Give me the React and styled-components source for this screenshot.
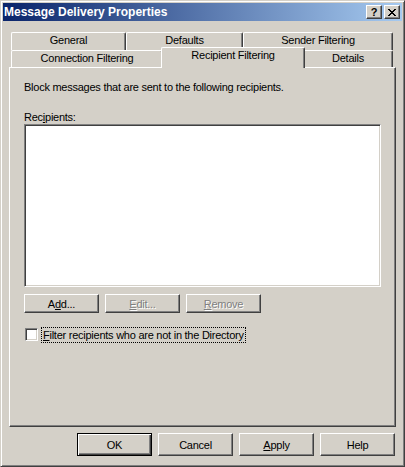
import React from 'react';
import styled, { createGlobalStyle, css } from 'styled-components';

const GlobalStyle = createGlobalStyle`
  html, body {
    margin: 0;
    padding: 0;
    background: #d4d0c8;
  }
`;

const raised = css`
  border: 1px solid;
  border-color: #ffffff #404040 #404040 #ffffff;
  box-shadow: inset -1px -1px #808080;
`;

const Window = styled.div`
  width: 405px;
  height: 467px;
  box-sizing: border-box;
  padding: 2px;
  background: #d4d0c8;
  border: 1px solid;
  border-color: #d4d0c8 #404040 #404040 #d4d0c8;
  box-shadow: inset 1px 1px #ffffff, inset -1px -1px #808080;
  display: flex;
  flex-direction: column;
  font-family: "Liberation Sans", Arial, sans-serif;
  font-size: 11px;
  letter-spacing: -0.25px;
  color: #000;
`;

const TitleBar = styled.div`
  height: 18px;
  display: flex;
  align-items: center;
  padding: 0 2px 0 1px;
  background: linear-gradient(to right, #0a246a, #a6caf0);
`;

const TitleText = styled.div`
  flex: 1;
  color: #fff;
  font-weight: bold;
  font-size: 12px;
  letter-spacing: 0;
  line-height: 18px;
  white-space: nowrap;
`;

const TitleButtons = styled.div`
  display: flex;
  gap: 2px;
`;

const TitleButton = styled.div`
  ${raised};
  width: 16px;
  height: 14px;
  box-sizing: border-box;
  background: #d4d0c8;
  display: flex;
  align-items: center;
  justify-content: center;
  font-weight: bold;
  font-size: 11px;
  letter-spacing: 0;
  line-height: 12px;
`;

const Body = styled.div`
  padding: 11px 6px 0;
`;

const TabStrip = styled.div`
  display: flex;
  flex-direction: column;
  padding-left: 2px;
`;

const TabRow = styled.div`
  display: flex;
  position: relative;
`;

const Tab = styled.div`
  box-sizing: border-box;
  width: ${(p) => p.$w}px;
  height: ${(p) => p.$h}px;
  border-top: 1px solid #fff;
  border-left: 1px solid #fff;
  border-right: 1px solid #404040;
  border-top-left-radius: 2px;
  border-top-right-radius: 2px;
  box-shadow: inset -1px 0 #808080;
  background: #d4d0c8;
  text-align: center;
  line-height: 13px;
  padding-top: 1px;
  white-space: nowrap;
`;

const ActiveTab = styled(Tab)`
  position: relative;
  z-index: 2;
  margin: -3px -2px -1px;
  padding-top: 1px;
`;

const Panel = styled.div`
  ${raised};
  height: 360px;
  box-sizing: border-box;
  padding: 13px 14px 0;
  display: flex;
  flex-direction: column;
`;

const Line = styled.div`
  line-height: 13px;
  margin-bottom: ${(p) => p.$mb || 0}px;
`;

const ListBox = styled.div`
  width: 357px;
  height: 163px;
  box-sizing: border-box;
  background: #fff;
  border: 1px solid;
  border-color: #808080 #ffffff #ffffff #808080;
  box-shadow: inset 1px 1px #404040, inset -1px -1px #d4d0c8;
`;

const ButtonRow = styled.div`
  display: flex;
  gap: 6px;
  margin-top: ${(p) => p.$mt}px;
  justify-content: ${(p) => p.$end ? 'flex-end' : 'flex-start'};
  padding-right: ${(p) => p.$pr || 0}px;
`;

const Button = styled.div`
  ${raised};
  width: 75px;
  height: ${(p) => p.$h}px;
  box-sizing: border-box;
  background: #d4d0c8;
  display: flex;
  align-items: center;
  justify-content: center;
  color: ${(p) => (p.$disabled ? '#808080' : '#000')};
  text-shadow: ${(p) => (p.$disabled ? '1px 1px 0 #fff' : 'none')};
  ${(p) =>
    p.$default &&
    css`
      border-color: #000;
      box-shadow: inset 1px 1px #fff, inset -1px -1px #404040, inset -2px -2px #808080;
    `}
`;

const U = styled.span`
  text-decoration: underline;
`;

const CheckRow = styled.div`
  display: flex;
  align-items: flex-start;
  margin-top: 14px;
  margin-left: 1px;
  gap: 3px;
`;

const CheckBox = styled.div`
  width: 13px;
  height: 13px;
  margin-top: 1px;
  box-sizing: border-box;
  background: #fff;
  border: 1px solid;
  border-color: #808080 #ffffff #ffffff #808080;
  box-shadow: inset 1px 1px #404040, inset -1px -1px #d4d0c8;
`;

const FocusLabel = styled.span`
  border: 1px dotted #000;
  padding: 0 1px;
  line-height: 14px;
  white-space: nowrap;
`;

const CloseGlyph = () => (
  <svg width="8" height="7" viewBox="0 0 8 7" shapeRendering="crispEdges">
    <path
      fill="#000"
      d="M0 0h2v1H0zM6 0h2v1H6zM1 1h2v1H1zM5 1h2v1H5zM2 2h4v1H2zM3 3h2v1H3zM2 4h4v1H2zM1 5h2v1H1zM5 5h2v1H5zM0 6h2v1H0zM6 6h2v1H6z"
    />
  </svg>
);

const App = () => (
  <Window>
    <GlobalStyle />
    <TitleBar>
      <TitleText>Message Delivery Properties</TitleText>
      <TitleButtons>
        <TitleButton>?</TitleButton>
        <TitleButton>
          <CloseGlyph />
        </TitleButton>
      </TitleButtons>
    </TitleBar>

    <Body>
      <TabStrip>
        <TabRow>
          <Tab $w={115} $h={18}>General</Tab>
          <Tab $w={117} $h={18}>Defaults</Tab>
          <Tab $w={150} $h={18}>Sender Filtering</Tab>
        </TabRow>
        <TabRow>
          <Tab $w={152} $h={17}>Connection Filtering</Tab>
          <ActiveTab $w={144} $h={21}>Recipient Filtering</ActiveTab>
          <Tab $w={90} $h={17}>Details</Tab>
        </TabRow>
      </TabStrip>

      <Panel>
        <Line $mb={17}>Block messages that are sent to the following recipients.</Line>
        <Line>
          Rec<U>i</U>pients:
        </Line>
        <ListBox />
        <ButtonRow $mt={7}>
          <Button $h={19}>
            A<U>d</U>d...
          </Button>
          <Button $h={19} $disabled>
            <U>E</U>dit...
          </Button>
          <Button $h={19} $disabled>
            <U>R</U>emove
          </Button>
        </ButtonRow>
        <CheckRow>
          <CheckBox />
          <FocusLabel>
            <U>F</U>ilter recipients who are not in the Directory
          </FocusLabel>
        </CheckRow>
      </Panel>
    </Body>

    <ButtonRow $mt={6} $end $pr={7}>
      <Button $h={23} $default>OK</Button>
      <Button $h={23}>Cancel</Button>
      <Button $h={23}>
        <U>A</U>pply
      </Button>
      <Button $h={23}>Help</Button>
    </ButtonRow>
  </Window>
);

export default App;
